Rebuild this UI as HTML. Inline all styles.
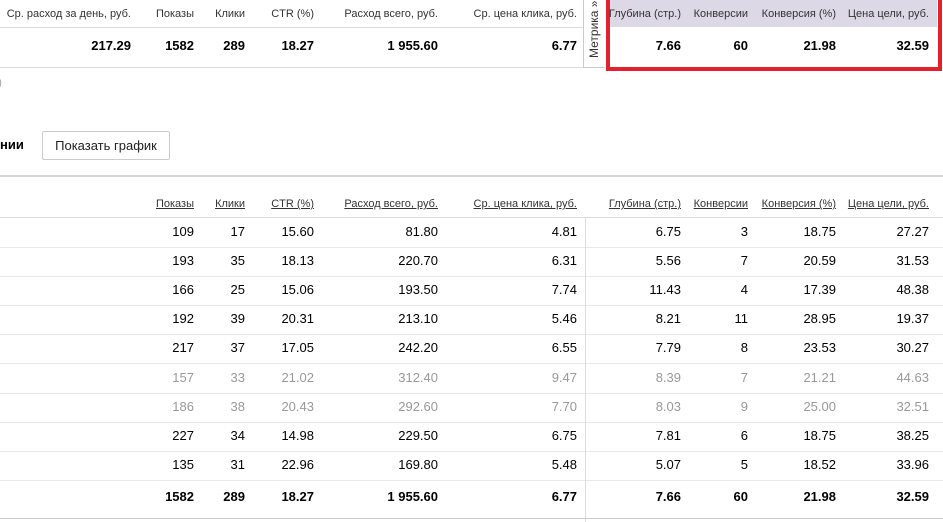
<!DOCTYPE html><html><head><meta charset="utf-8"><style>
body{margin:0;width:943px;height:522px;background:#fff;font-family:"Liberation Sans",Arial,sans-serif;position:relative;overflow:hidden;color:#000}
.a{position:absolute;white-space:nowrap}
.h{font-size:11px;color:#333}
.n{font-size:13px;text-align:right}
.b{font-weight:bold}
.u{text-decoration:underline}
.g{color:#999}
.line{position:absolute;left:0;height:1px;background:#ddd}
</style></head><body>
<div class="a" style="left:610px;top:0;width:327px;height:27px;background:#dcd8e5"></div>
<div class="line" style="top:27px;width:583px"></div>
<div class="line" style="top:67px;width:583px"></div>
<div class="a" style="left:583px;top:0;width:21px;height:67px;border-left:1px solid #ccc;border-bottom:1px solid #ccc;background:#fff"></div>
<div class="a" style="left:583px;top:33px;width:22px;height:14px;font-size:12px;color:#333;transform:rotate(-90deg);transform-origin:center;text-align:center;line-height:14px;left:571px;width:46px;top:28px">Метрика »</div>
<div class="a" style="left:606px;top:-4px;width:328px;height:67px;border:4px solid #e3202c"></div>
<div id="t"></div>
<div class="a" style="left:-2px;top:75px;font-size:12px;color:#aaa">)</div>
<div class="a b" style="left:0;top:137px;font-size:13px">нии</div>
<div class="a" style="left:42px;top:131px;width:126px;height:27px;border:1px solid #ccc;border-radius:2px;font-size:13px;line-height:27px;text-align:center;color:#222">Показать график</div>
<div class="a" style="left:0;top:175px;width:943px;height:2px;background:#d5d5d5"></div>
<div class="line" style="top:217px;width:943px"></div>
<div class="a" style="left:585px;top:217px;width:1px;height:305px;background:#ddd"></div>
<div class="line" style="top:518px;width:943px;background:#ccc"></div>
<script>
var R=[131,194,245,314,438,577,681,748,836,929];
var H=["Ср. расход за день, руб.","Показы","Клики","CTR (%)","Расход всего, руб.","Ср. цена клика, руб.","Глубина (стр.)","Конверсии","Конверсия (%)","Цена цели, руб."];
var T=["217.29","1582","289","18.27","1 955.60","6.77","7.66","60","21.98","32.59"];
var s="";
function c(x,y,t,cls){s+='<div class="a '+cls+'" style="right:'+(943-x)+'px;top:'+y+'px">'+t+'</div>';}
for(var i=0;i<10;i++){c(R[i],8,H[i],"h");c(R[i],38,T[i],"n b");if(i>0)c(R[i],198,H[i],"h u");}
var D=[["109","17","15.60","81.80","4.81","6.75","3","18.75","27.27"],["193","35","18.13","220.70","6.31","5.56","7","20.59","31.53"],["166","25","15.06","193.50","7.74","11.43","4","17.39","48.38"],["192","39","20.31","213.10","5.46","8.21","11","28.95","19.37"],["217","37","17.05","242.20","6.55","7.79","8","23.53","30.27"],["157","33","21.02","312.40","9.47","8.39","7","21.21","44.63"],["186","38","20.43","292.60","7.70","8.03","9","25.00","32.51"],["227","34","14.98","229.50","6.75","7.81","6","18.75","38.25"],["135","31","22.96","169.80","5.48","5.07","5","18.52","33.96"]];
for(var r=0;r<9;r++){var y=224+r*29.1;for(var j=0;j<9;j++)c(R[j+1],y,D[r][j],"n"+(r==5||r==6?" g":""));if(r<8)s+='<div class="line" style="top:'+Math.round(y+23)+'px;width:943px;background:#e8e8e8"></div>';}
s+='<div class="line" style="top:480px;width:943px;background:#e8e8e8"></div>';
for(var j=1;j<10;j++)c(R[j],489,T[j],"n b");
document.getElementById("t").innerHTML=s;
</script>
</body></html>
